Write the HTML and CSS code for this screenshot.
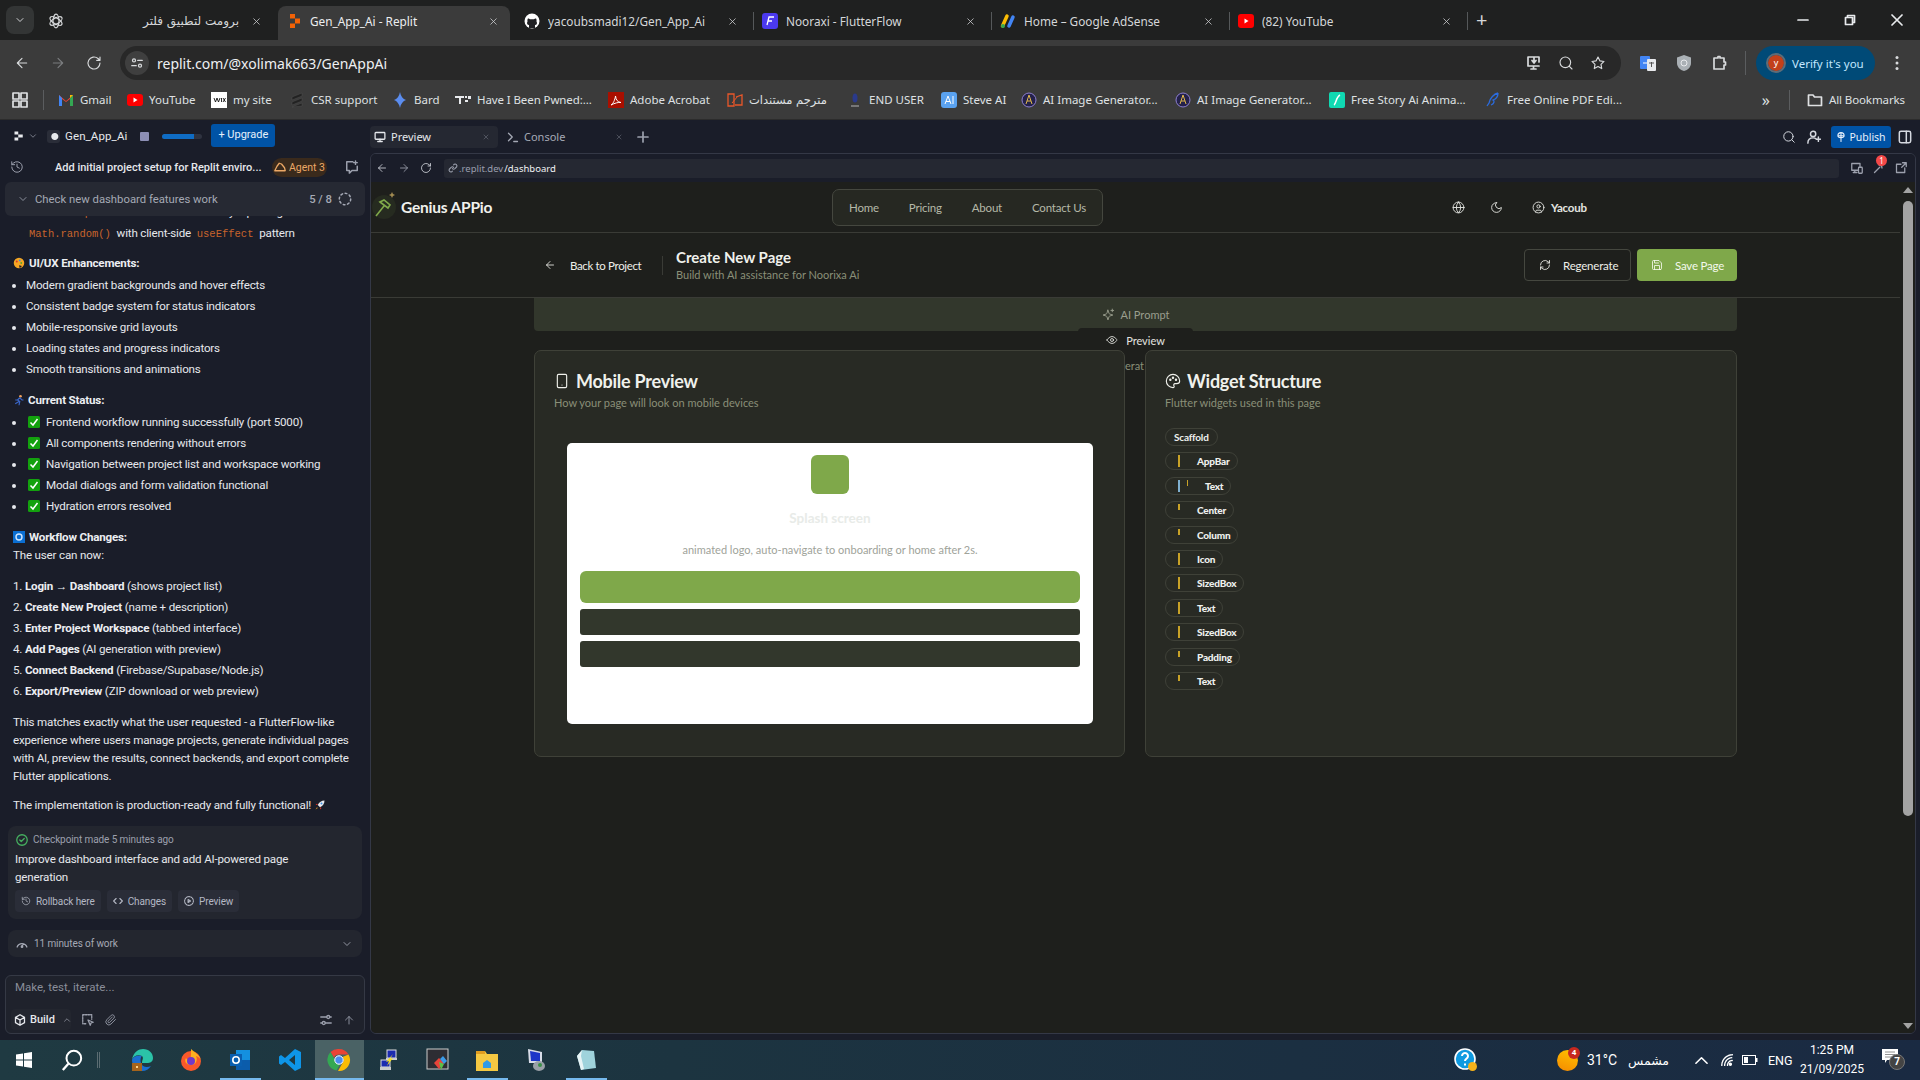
FILE: index.html
```html
<!DOCTYPE html>
<html lang="en">

<head>
    <meta charset="utf-8">
    <title>Gen_App_Ai - Replit</title>
    <link rel="stylesheet" href="styles.css">
</head>

<body>
    <!-- shared line icons -->
    <svg class="defs">
        <symbol id="i-left" viewBox="0 0 24 24"><path d="M19 12H5M12 19l-7-7 7-7"/></symbol>
        <symbol id="i-right" viewBox="0 0 24 24"><path d="M5 12h14M12 5l7 7-7 7"/></symbol>
        <symbol id="i-reload" viewBox="0 0 24 24"><path d="M21 12a9 9 0 1 1-3-6.7L21 8M21 3v5h-5"/></symbol>
        <symbol id="i-refresh" viewBox="0 0 24 24"><path d="M3 12a9 9 0 0 1 15-6.700L21 8M21 3v5h-5M21 12a9 9 0 0 1-15 6.700L3 16M3 21v-5h5"/></symbol>
        <symbol id="i-save" viewBox="0 0 24 24"><path d="M19 21H5a2 2 0 0 1-2-2V5a2 2 0 0 1 2-2h11l5 5v11a2 2 0 0 1-2 2zM17 21v-8H7v8M7 3v5h8"/></symbol>
        <symbol id="i-globe" viewBox="0 0 24 24"><circle cx="12" cy="12" r="10"/><path d="M2 12h20M12 2a15 15 0 0 1 4 10 15 15 0 0 1-4 10 15 15 0 0 1-4-10 15 15 0 0 1 4-10z"/></symbol>
        <symbol id="i-moon" viewBox="0 0 24 24"><path d="M12 3a6 6 0 0 0 9 9 9 9 0 1 1-9-9z"/></symbol>
        <symbol id="i-user" viewBox="0 0 24 24"><circle cx="12" cy="12" r="10"/><circle cx="12" cy="10" r="3"/><path d="M7 20.700V19a2 2 0 0 1 2-2h6a2 2 0 0 1 2 2v1.700"/></symbol>
        <symbol id="i-phone" viewBox="0 0 24 24"><rect x="5" y="2" width="14" height="20" rx="2"/><path d="M12 18h.01"/></symbol>
        <symbol id="i-palette" viewBox="0 0 24 24"><path d="M12 22a10 10 0 1 1 10-10c0 2.500-2 4-4.500 4H15a2 2 0 0 0-1.500 3.300c.6.8.2 2.700-1.500 2.700z"/><circle cx="8" cy="10" r="1"/><circle cx="12" cy="7" r="1"/><circle cx="16.500" cy="10" r="1"/></symbol>
        <symbol id="i-eye" viewBox="0 0 24 24"><path d="M2 12s4-7 10-7 10 7 10 7-4 7-10 7-10-7-10-7z"/><circle cx="12" cy="12" r="3"/></symbol>
        <symbol id="i-spark" viewBox="0 0 24 24"><path d="M11 4l1.900 5.800a2 2 0 0 0 1.300 1.300L20 13l-5.800 1.900a2 2 0 0 0-1.300 1.300L11 22l-1.900-5.800a2 2 0 0 0-1.300-1.300L2 13l5.800-1.900a2 2 0 0 0 1.300-1.300zM19 2v5M16.500 4.500h5"/></symbol>
        <symbol id="i-search" viewBox="0 0 24 24"><circle cx="11" cy="11" r="8"/><path d="M21 21l-4.300-4.300"/></symbol>
        <symbol id="i-close" viewBox="0 0 24 24"><path d="M6 6l12 12M18 6L6 18"/></symbol>
        <symbol id="i-down" viewBox="0 0 24 24"><path d="M6 9l6 6 6-6"/></symbol>
        <symbol id="i-up" viewBox="0 0 24 24"><path d="M12 20V5M5 12l7-7 7 7"/></symbol>
        <symbol id="i-clock" viewBox="0 0 24 24"><path d="M3 12a9 9 0 1 0 3-6.700L3 8M3 3v5h5M12 7v5l4 2"/></symbol>
    </svg>

    <!-- browser tabs -->
    <div class="tabstrip">
        <div class="tab-menu"><svg class="ic ic-12"><use href="#i-down"/></svg></div>
        <div class="tab">
            <svg class="fav" viewBox="0 0 16 16" fill="none" stroke="#d5d7d9" stroke-width="1.200"><ellipse cx="8" cy="8" rx="3" ry="6.800"/><ellipse cx="8" cy="8" rx="3" ry="6.800" transform="rotate(60 8 8)"/><ellipse cx="8" cy="8" rx="3" ry="6.800" transform="rotate(120 8 8)"/></svg>
            <span class="tab-title rtl">برومت لتطبيق فلتر</span>
            <svg class="ic tab-x"><use href="#i-close"/></svg>
        </div>
        <div class="tab active">
            <svg class="fav" viewBox="0 0 16 16"><path d="M4 1h5v4.500H4zM9 5.500h5v5H9zM4 10.500h5V15H4z" fill="#f26207"/></svg>
            <span class="tab-title">Gen_App_Ai - Replit</span>
            <svg class="ic tab-x"><use href="#i-close"/></svg>
        </div>
        <div class="tab sep">
            <svg class="fav" viewBox="0 0 16 16"><circle cx="8" cy="8" r="7.500" fill="#fff"/><path d="M5 15v-3C3 12 2.500 10 3.500 8.500 3.300 7 3.500 6 4 5.500c1 0 1.500.4 2 .8h4c.5-.4 1-.8 2-.8.5.5.7 1.500.5 3 1 1.500.5 3.500-1.500 3.500v3z" fill="#202124"/></svg>
            <span class="tab-title">yacoubsmadi12/Gen_App_Ai</span>
            <svg class="ic tab-x"><use href="#i-close"/></svg>
        </div>
        <div class="tab sep">
            <svg class="fav" viewBox="0 0 16 16"><rect width="16" height="16" rx="3" fill="#4b39ef"/><path d="M5 12l2-8h5M6 8h4" stroke="#fff" fill="none" stroke-width="1.300"/></svg>
            <span class="tab-title">Nooraxi - FlutterFlow</span>
            <svg class="ic tab-x"><use href="#i-close"/></svg>
        </div>
        <div class="tab sep">
            <svg class="fav" viewBox="0 0 16 16"><path d="M2.500 13L7 3" stroke="#fbbc04" stroke-width="3.500" stroke-linecap="round"/><path d="M9 13l4-9" stroke="#4285f4" stroke-width="3.500" stroke-linecap="round"/><circle cx="3" cy="13" r="2" fill="#34a853"/></svg>
            <span class="tab-title">Home – Google AdSense</span>
            <svg class="ic tab-x"><use href="#i-close"/></svg>
        </div>
        <div class="tab sep">
            <svg class="fav" viewBox="0 0 16 16"><rect y="1" width="16" height="14" rx="3" fill="#f00"/><path d="M6.500 5.500v5l4-2.500z" fill="#fff"/></svg>
            <span class="tab-title">(82) YouTube</span>
            <svg class="ic tab-x"><use href="#i-close"/></svg>
        </div>
        <span class="tab-new">+</span>
        <div class="win-controls">
            <svg class="ic ic-12" viewBox="0 0 12 12"><path d="M1 6h10"/></svg>
            <svg class="ic ic-12" viewBox="0 0 12 12"><path d="M1.500 3.500h7v7h-7zM3.500 3.500v-2h7v7h-2"/></svg>
            <svg class="ic ic-12" viewBox="0 0 12 12"><path d="M1 1l10 10M11 1L1 11"/></svg>
        </div>
    </div>

    <!-- address bar -->
    <div class="toolbar">
        <svg class="ic ic-16 nav-btn"><use href="#i-left"/></svg>
        <svg class="ic ic-16 nav-btn dim"><use href="#i-right"/></svg>
        <svg class="ic ic-16 nav-btn"><use href="#i-reload"/></svg>
        <div class="omnibox">
            <span class="site-chip"><svg class="ic ic-12" viewBox="0 0 16 16"><circle cx="4" cy="4.500" r="2"/><path d="M9 4.500h6M1 11.500h6"/><circle cx="12" cy="11.500" r="2"/></svg></span>
            <span class="omni-url">replit.com/@xolimak663/GenAppAi</span>
            <span class="omni-icons">
                <svg class="ic ic-16" viewBox="0 0 16 16"><path d="M13 7V2H2v9h11M8 7V3M6 5.500L8 8l2-2.500M5 14h5M7.500 11v3"/></svg>
                <svg class="ic ic-16"><use href="#i-search"/></svg>
                <svg class="ic ic-16" viewBox="0 0 24 24"><path d="M12 3l2.800 5.800 6.200.9-4.500 4.400 1.100 6.300L12 17.400l-5.600 3 1.100-6.300L3 9.700l6.200-.9z"/></svg>
            </span>
        </div>
        <div class="ext-icons">
            <svg class="fav-18" viewBox="0 0 18 18"><rect x="1" y="2" width="10" height="13" rx="1" fill="#4285f4"/><rect x="8" y="5" width="9" height="12" rx="1" fill="#e8eaed"/><path d="M4 9h4" stroke="#fff"/><path d="M10 9h5M12.500 8v5" stroke="#555"/></svg>
            <svg class="fav-18" viewBox="0 0 18 18"><path d="M9 1l7 2.500V9c0 4-3 7-7 8-4-1-7-4-7-8V3.500z" fill="#aab0b5"/><circle cx="9" cy="9" r="3" fill="none" stroke="#e8eaed"/></svg>
            <svg class="ic ic-16" viewBox="0 0 16 16"><path d="M3 3h4V1.500h2V3h4v4h1.500v3H13v4H3z"/></svg>
        </div>
        <span class="tool-sep"></span>
        <div class="verify"><span class="avatar">y</span>Verify it's you</div>
        <svg class="menu-dots" viewBox="0 0 4 16"><circle cx="2" cy="2.500" r="1.500"/><circle cx="2" cy="8" r="1.500"/><circle cx="2" cy="13.500" r="1.500"/></svg>
    </div>

    <!-- bookmarks -->
    <div class="bookmarks">
        <svg class="ic ic-16 apps" viewBox="0 0 16 16"><path d="M1 1h6v6H1zM9 1h6v6H9zM1 9h6v6H1zM9 9h6v6H9z"/></svg>
        <span class="tool-sep short"></span>
        <a class="bm bm-gmail"><svg class="fav" viewBox="0 0 16 16"><path d="M1 14V3l7 6 7-6v11h-3V7L8 10 4 7v7z" fill="#ea4335"/><path d="M1 14V3l3 3v8z" fill="#4285f4"/><path d="M15 14V3l-3 3v8z" fill="#34a853"/><path d="M12 3l3 0-3 3z" fill="#fbbc04"/></svg>Gmail</a>
        <a class="bm bm-yt"><svg class="fav" viewBox="0 0 16 16"><rect y="2" width="16" height="12" rx="3" fill="#f00"/><path d="M6.500 5.500v5l4-2.500z" fill="#fff"/></svg>YouTube</a>
        <a class="bm bm-wix"><svg class="fav" viewBox="0 0 16 16"><rect width="16" height="16" fill="#fff"/><path d="M3 6l1.500 4L6 6l1.500 4L9 6M10.500 6v4M12 6l2.500 4M14.500 6L12 10" stroke="#111" fill="none" stroke-width=".9"/></svg>my site</a>
        <a class="bm bm-csr"><svg class="fav" viewBox="0 0 16 16"><path d="M3 5l10-4v3L3 8zM3 10l10-4v3L3 13zM3 15l10-4v3z" fill="#222" stroke="#555" stroke-width=".4"/></svg>CSR support</a>
        <a class="bm bm-bard"><svg class="fav" viewBox="0 0 16 16"><path d="M8 0c.6 4 3 7 6 8-3 1-5.400 4-6 8-.6-4-3-7-6-8 3-1 5.400-4 6-8z" fill="#5b8def"/></svg>Bard</a>
        <a class="bm bm-pwned"><svg class="fav" viewBox="0 0 16 16"><path d="M0 4h9v2H6v6H4V6H0zM10 4h2v2h-2zM13 4h3v3h-3zM10 8h3v2h-3z" fill="#e8eaed"/></svg>Have I Been Pwned:...</a>
        <a class="bm bm-adobe"><svg class="fav" viewBox="0 0 16 16"><rect width="16" height="16" fill="#a80f00"/><path d="M3 13c2-1 4-5 4.500-9 .5 4 2 6 5.500 6.500-3-.3-6 .5-10 2.500z" fill="none" stroke="#fff"/></svg>Adobe Acrobat</a>
        <a class="bm bm-ar"><svg class="fav" viewBox="0 0 16 16"><path d="M1 2h6v12H1zM9 5l6-2v10H8" fill="none" stroke="#e8572a" stroke-width="1.300"/><path d="M5 11l6-7" stroke="#e8572a"/></svg><span class="rtl">مترجم مستندات</span></a>
        <a class="bm bm-end"><svg class="fav" viewBox="0 0 16 16"><ellipse cx="8" cy="6" rx="2.500" ry="4.500" fill="#2a3a8c"/><path d="M4 13h8v2H4z" fill="#777"/></svg>END USER</a>
        <a class="bm bm-steve"><svg class="fav" viewBox="0 0 16 16"><rect width="16" height="16" rx="3" fill="#5aa2f0"/><path d="M4 12l3-8 3 8M5 9.500h4M12 4v8" stroke="#fff" fill="none"/></svg>Steve AI</a>
        <a class="bm bm-img"><svg class="fav" viewBox="0 0 16 16"><circle cx="8" cy="8" r="7" fill="#24214a" stroke="#8d7fd0"/><path d="M5 12l3-9 3 9M6 9h4" stroke="#e0b84c" fill="none"/></svg>AI Image Generator...</a>
        <a class="bm bm-img2"><svg class="fav" viewBox="0 0 16 16"><circle cx="8" cy="8" r="7" fill="#24214a" stroke="#8d7fd0"/><path d="M5 12l3-9 3 9M6 9h4" stroke="#e0b84c" fill="none"/></svg>AI Image Generator...</a>
        <a class="bm bm-story"><svg class="fav" viewBox="0 0 16 16"><rect width="16" height="16" rx="2" fill="#10d9b2"/><path d="M5 13c2-1 2-8 6-10" stroke="#fff" fill="none" stroke-width="1.500"/></svg>Free Story Ai Anima...</a>
        <a class="bm"><svg class="fav" viewBox="0 0 16 16"><path d="M13 1C9 2 5 6 4 11l-2 3M13 1c0 3-2 6-5 7 2 1 1 4-2 5" stroke="#2b6ce0" fill="none" stroke-width="1.300"/></svg>Free Online PDF Edi...</a>
        <span class="bm-more">»</span>
        <span class="tool-sep short"></span>
        <a class="bm bm-all"><svg class="ic ic-16" viewBox="0 0 16 16"><path d="M1.500 3h4.500l1.500 2h7v8.500h-13z"/></svg>All Bookmarks</a>
    </div>

    <div class="workspace">
        <!-- agent chat -->
        <aside class="chat">
            <div class="chat-top">
                <svg class="rep-logo" viewBox="0 0 16 16"><path d="M2 2h5v4H2zM7 6h6v4H7zM2 10h5v4H2z" fill="#e8eaed"/></svg>
                <svg class="ic ic-10 muted"><use href="#i-down"/></svg>
                <span class="proj-chip"></span>
                <span class="proj-name">Gen_App_Ai</span>
                <span class="stop-box"></span>
                <span class="usage"><span></span></span>
                <span class="upgrade">+ Upgrade</span>
            </div>
            <div class="chat-title">
                <svg class="ic ic-14 muted"><use href="#i-clock"/></svg>
                <span class="thread">Add initial project setup for Replit enviro...</span>
                <span class="agent"><svg class="ic ic-12" viewBox="0 0 16 16"><path d="M1 13l3-6 3-4 3 1 4 5 1 4z"/></svg>Agent 3</span>
                <svg class="ic ic-14 muted new-chat" viewBox="0 0 16 16"><path d="M9 2H2v10h3v3l3-3h6V7M12 1v4M10 3h4"/></svg>
            </div>
            <div class="task-row">
                <svg class="ic ic-12 muted"><use href="#i-down"/></svg>
                <span class="task-name">Check new dashboard features work</span>
                <span class="task-count">5 / 8</span>
                <svg class="ic ic-14 spinner" viewBox="0 0 16 16"><circle cx="8" cy="8" r="6.500" stroke-dasharray="2 3"/></svg>
            </div>
            <div class="messages">
                <ul class="clipped">
                    <li>in <code>src/components/ui/StatusView</code> by replacing<br><code>Math.random()</code> with client-side <code>useEffect</code> pattern</li>
                </ul>
                <h4 class="msg-head"><svg class="emoji" viewBox="0 0 16 16"><circle cx="8" cy="8" r="7" fill="#f5a623"/><circle cx="5" cy="6" r="1.300" fill="#d9362b"/><circle cx="9" cy="4.500" r="1.200" fill="#3a8ee6"/><circle cx="11" cy="8" r="1.200" fill="#55a630"/><path d="M9 15l-1-4 4 1z" fill="#1a1d29"/></svg>UI/UX Enhancements:</h4>
                <ul class="bullets">
                    <li>Modern gradient backgrounds and hover effects</li>
                    <li>Consistent badge system for status indicators</li>
                    <li>Mobile-responsive grid layouts</li>
                    <li>Loading states and progress indicators</li>
                    <li>Smooth transitions and animations</li>
                </ul>
                <h4 class="msg-head status"><svg class="emoji" viewBox="0 0 16 16"><circle cx="10" cy="3" r="1.800" fill="#f0a05a"/><path d="M9 5L6 8l3 2-1 5M9 5l3 3 2 0M6 8H3M8 10l-5 3" stroke="#3a66c8" stroke-width="1.600" fill="none"/></svg>Current Status:</h4>
                <ul class="bullets checks">
                    <li><svg class="tick" viewBox="0 0 12 12"><rect width="12" height="12" rx="1.500" fill="#13a10e"/><path d="M2.500 6.500l2.500 2.500 4.500-6" stroke="#fff" stroke-width="1.500" fill="none"/></svg>Frontend workflow running successfully (port 5000)</li>
                    <li><svg class="tick" viewBox="0 0 12 12"><rect width="12" height="12" rx="1.500" fill="#13a10e"/><path d="M2.500 6.500l2.500 2.500 4.500-6" stroke="#fff" stroke-width="1.500" fill="none"/></svg>All components rendering without errors</li>
                    <li><svg class="tick" viewBox="0 0 12 12"><rect width="12" height="12" rx="1.500" fill="#13a10e"/><path d="M2.500 6.500l2.500 2.500 4.500-6" stroke="#fff" stroke-width="1.500" fill="none"/></svg>Navigation between project list and workspace working</li>
                    <li><svg class="tick" viewBox="0 0 12 12"><rect width="12" height="12" rx="1.500" fill="#13a10e"/><path d="M2.500 6.500l2.500 2.500 4.500-6" stroke="#fff" stroke-width="1.500" fill="none"/></svg>Modal dialogs and form validation functional</li>
                    <li><svg class="tick" viewBox="0 0 12 12"><rect width="12" height="12" rx="1.500" fill="#13a10e"/><path d="M2.500 6.500l2.500 2.500 4.500-6" stroke="#fff" stroke-width="1.500" fill="none"/></svg>Hydration errors resolved</li>
                </ul>
                <h4 class="msg-head flow"><svg class="emoji" viewBox="0 0 12 12"><rect width="12" height="12" fill="#0a6ed1"/><circle cx="6" cy="6" r="3" fill="none" stroke="#cfe6ff" stroke-width="1.400"/></svg>Workflow Changes:</h4>
                <p class="msg-line">The user can now:</p>
                <ol class="steps">
                    <li>1. <b>Login → Dashboard</b> (shows project list)</li>
                    <li>2. <b>Create New Project</b> (name + description)</li>
                    <li>3. <b>Enter Project Workspace</b> (tabbed interface)</li>
                    <li>4. <b>Add Pages</b> (AI generation with preview)</li>
                    <li>5. <b>Connect Backend</b> (Firebase/Supabase/Node.js)</li>
                    <li>6. <b>Export/Preview</b> (ZIP download or web preview)</li>
                </ol>
                <p class="msg-para">This matches exactly what the user requested - a FlutterFlow-like experience where users manage projects, generate individual pages with AI, preview the results, connect backends, and export complete Flutter applications.</p>
                <p class="msg-para">The implementation is production-ready and fully functional! <svg class="emoji rocket" viewBox="0 0 16 16"><path d="M14 2c-4 0-7 2-9 6l3 3c4-2 6-5 6-9z" fill="#e8eaed"/><circle cx="10" cy="6" r="1.300" fill="#3a8ee6"/><path d="M5 8H2l2-2zM8 11v3l2-2z" fill="#d9362b"/><path d="M4 11l-2 3 3-2z" fill="#f5a623"/></svg></p>

                <div class="checkpoint">
                    <div class="cp-head"><svg class="ic ic-12 green" viewBox="0 0 16 16"><circle cx="8" cy="8" r="7"/><path d="M5 8l2 2 4-4"/></svg>Checkpoint made 5 minutes ago</div>
                    <p class="cp-text">Improve dashboard interface and add AI-powered page generation</p>
                    <div class="cp-actions">
                        <span class="cp-btn"><svg class="ic ic-10"><use href="#i-clock"/></svg>Rollback here</span>
                        <span class="cp-btn"><svg class="ic ic-10" viewBox="0 0 16 16"><path d="M5 4L1 8l4 4M11 4l4 4-4 4"/></svg>Changes</span>
                        <span class="cp-btn"><svg class="ic ic-10" viewBox="0 0 16 16"><circle cx="8" cy="8" r="7" stroke-dasharray="2 1.500"/><path d="M6.500 5.500v5l4-2.500z"/></svg>Preview</span>
                    </div>
                </div>
                <div class="work-row">
                    <svg class="ic ic-12" viewBox="0 0 16 16"><path d="M1.500 12a7 7 0 0 1 13 0M8 11l2-3"/><circle cx="8" cy="11.500" r="1"/></svg>
                    <span>11 minutes of work</span>
                    <svg class="ic ic-12 work-caret"><use href="#i-down"/></svg>
                </div>
            </div>
            <div class="composer">
                <div class="placeholder">Make, test, iterate...</div>
                <div class="composer-bar">
                    <span class="build"><svg class="ic ic-12" viewBox="0 0 16 16"><path d="M8 1l6 3.500v7L8 15l-6-3.500v-7zM2 4.500L8 8l6-3.500M8 8v7"/></svg>Build<svg class="ic ic-10 flip"><use href="#i-down"/></svg></span>
                    <svg class="ic ic-12 muted" viewBox="0 0 16 16"><path d="M1 1h12v6M1 1v12h5" stroke-dasharray="2 1.500"/><path d="M8 8l7 3-3 1-1 3z"/></svg>
                    <svg class="ic ic-12 muted" viewBox="0 0 24 24"><path d="M21 11l-9 9a6 6 0 0 1-8.500-8.500l9-9a4 4 0 0 1 5.600 5.600l-9 9a2 2 0 0 1-2.800-2.800l8.500-8.500"/></svg>
                    <svg class="ic ic-12 muted composer-tune" viewBox="0 0 16 16"><path d="M1 4h8M13 4h2M1 12h2M7 12h8"/><circle cx="11" cy="4" r="2"/><circle cx="5" cy="12" r="2"/></svg>
                    <svg class="ic ic-12 muted"><use href="#i-up"/></svg>
                </div>
            </div>
        </aside>

        <!-- preview pane -->
        <section class="pane">
            <div class="pane-tabs">
                <div class="pane-tab on"><svg class="ic ic-12" viewBox="0 0 16 16"><rect x="1.500" y="2" width="13" height="9" rx="1"/><path d="M8 11v3M5 14h6"/></svg><span>Preview</span><svg class="ic ic-8 pane-x"><use href="#i-close"/></svg></div>
                <div class="pane-tab"><svg class="ic ic-12" viewBox="0 0 16 16"><path d="M2 3l5 5-5 5M9 14h5"/></svg><span>Console</span><svg class="ic ic-8 pane-x"><use href="#i-close"/></svg></div>
                <svg class="ic ic-12 muted pane-plus" viewBox="0 0 12 12"><path d="M6 1v10M1 6h10"/></svg>
                <div class="pane-tools">
                    <svg class="ic ic-14"><use href="#i-search"/></svg>
                    <svg class="ic ic-14" viewBox="0 0 16 16"><circle cx="7" cy="4.500" r="3"/><path d="M1 15c0-4 2-6 6-6 1.500 0 2.500.3 3.300 1M13 8v5M10.500 10.500h5"/></svg>
                    <span class="publish"><svg class="ic ic-10" viewBox="0 0 16 16"><path d="M8 1a5 5 0 0 1 5 5c0 2-2 3-5 3S3 8 3 6a5 5 0 0 1 5-5zM8 9v6M8 1v8M3 6h10"/></svg>Publish</span>
                    <svg class="ic ic-14" viewBox="0 0 16 16"><rect x="1.500" y="1.500" width="13" height="13" rx="2"/><path d="M9.500 1.500v13"/></svg>
                </div>
            </div>
            <div class="frame">
                <div class="url-row">
                    <svg class="ic ic-12"><use href="#i-left"/></svg>
                    <svg class="ic ic-12 muted"><use href="#i-right"/></svg>
                    <svg class="ic ic-12"><use href="#i-reload"/></svg>
                    <div class="url-box"><svg class="ic ic-10 muted" viewBox="0 0 16 16"><path d="M7 9a3 3 0 0 0 4 0l3-3a3 3 0 0 0-4-4L9 3M9 7a3 3 0 0 0-4 0l-3 3a3 3 0 0 0 4 4l1-1"/></svg><span>.replit.dev</span><b>/dashboard</b></div>
                    <svg class="ic ic-12 muted" viewBox="0 0 16 16"><path d="M10 11H1V2h11v4M5 11v3M3 14h5"/><rect x="10" y="7" width="5" height="8" rx="1"/></svg>
                    <span class="devtools"><svg class="ic ic-12 muted" viewBox="0 0 16 16"><path d="M2 14l7-7M8 4a4 4 0 0 1 4 4"/></svg><span class="red-badge">1</span></span>
                    <svg class="ic ic-12 muted" viewBox="0 0 16 16"><path d="M8 3H2v11h11V8M9 7l6-6M10 1h5v5"/></svg>
                </div>
                <div class="viewport">
                    <div class="page">
                        <header class="app-head">
                            <svg class="brand-mark" viewBox="0 0 26 30"><circle cx="13" cy="17" r="12" fill="#262b20"/><path d="M5 26l8-10M9 12l8 6 2-3-6-5z" stroke="#7fa84a" stroke-width="1.600" fill="none"/><path d="M21 2l1 2 2 1-2 1-1 2-1-2-2-1 2-1z" fill="#a08a50"/></svg>
                            <span class="brand">Genius APPio</span>
                            <nav class="app-nav"><a>Home</a><a>Pricing</a><a>About</a><a>Contact Us</a></nav>
                            <div class="head-right">
                                <svg class="ic ic-13"><use href="#i-globe"/></svg>
                                <svg class="ic ic-13 moon"><use href="#i-moon"/></svg>
                                <span class="who"><svg class="ic ic-13"><use href="#i-user"/></svg>Yacoub</span>
                            </div>
                        </header>
                        <div class="sub-head">
                            <span class="back"><svg class="ic ic-12"><use href="#i-left"/></svg>Back to Project</span>
                            <span class="vline"></span>
                            <div class="sub-title">
                                <h1>Create New Page</h1>
                                <p>Build with AI assistance for Noorixa Ai</p>
                            </div>
                            <span class="btn outline"><svg class="ic ic-12"><use href="#i-refresh"/></svg>Regenerate</span>
                            <span class="btn primary"><svg class="ic ic-12"><use href="#i-save"/></svg>Save Page</span>
                        </div>
                        <div class="content">
                            <div class="prompt-tab"><svg class="ic ic-13"><use href="#i-spark"/></svg>AI Prompt</div>
                            <div class="preview-tab"><svg class="ic ic-12"><use href="#i-eye"/></svg>Preview</div>
                            <div class="cards">
                                <div class="card">
                                    <h2><svg class="ic ic-16"><use href="#i-phone"/></svg>Mobile Preview</h2>
                                    <p class="card-sub">How your page will look on mobile devices</p>
                                    <div class="phone">
                                        <div class="phone-logo"></div>
                                        <div class="phone-title">Splash screen</div>
                                        <div class="phone-desc">animated logo, auto-navigate to onboarding or home after 2s.</div>
                                        <div class="ph-btn green-bar"></div>
                                        <div class="ph-btn"></div>
                                        <div class="ph-btn"></div>
                                    </div>
                                </div>
                                <div class="gap-col"><span>erat</span></div>
                                <div class="card">
                                    <h2><svg class="ic ic-16"><use href="#i-palette"/></svg>Widget Structure</h2>
                                    <p class="card-sub">Flutter widgets used in this page</p>
                                    <div class="chips">
                                        <span class="chip root">Scaffold</span>
                                        <span class="chip"><i></i><b>AppBar</b></span>
                                        <span class="chip nested"><i class="blue"></i><i class="tiny"></i><b>Text</b></span>
                                        <span class="chip"><i class="tiny"></i><b>Center</b></span>
                                        <span class="chip"><i class="tiny"></i><b>Column</b></span>
                                        <span class="chip"><i></i><b>Icon</b></span>
                                        <span class="chip"><i></i><b>SizedBox</b></span>
                                        <span class="chip"><i></i><b>Text</b></span>
                                        <span class="chip"><i></i><b>SizedBox</b></span>
                                        <span class="chip"><i class="tiny"></i><b>Padding</b></span>
                                        <span class="chip"><i class="tiny"></i><b>Text</b></span>
                                    </div>
                                </div>
                            </div>
                        </div>
                    </div>
                    <div class="scrollbar">
                        <span class="arrow-up"></span>
                        <span class="thumb"></span>
                        <span class="arrow-down"></span>
                    </div>
                </div>
            </div>
        </section>
    </div>

    <!-- windows taskbar -->
    <footer class="taskbar">
        <svg class="tb-ic win" viewBox="0 0 16 16"><path d="M0 2.500l7-1v6H0zM8 1.300L16 0v7.500H8zM0 8.500h7v6l-7-1zM8 8.500h8V16l-8-1.300z" fill="#fff"/></svg>
        <svg class="tb-ic find" viewBox="0 0 24 24"><circle cx="14" cy="10" r="8" fill="none" stroke="#fff" stroke-width="2.200"/><path d="M8 16l-6 7" stroke="#fff" stroke-width="2.500"/></svg>
        <span class="tb-grip"></span>
        <span class="app"><svg class="tb-ic" viewBox="0 0 24 24"><path d="M2 12C3 4 9 1 13 1c6 0 10 4 10 9 0 4-3 5-6 5h-5c0-3 2-5 0-7C8 6 3 8 2 12z" fill="#2bc3a8"/><path d="M2 12c0 6 5 11 10 11 4 0 7-2 9-5-4 2-9 1-10-3-1-3 0-7 1-7-4-1-9 0-10 4z" fill="#1b6fd0"/><rect x="2" y="15" width="10" height="8" fill="#a5641c"/><rect x="6" y="18" width="2" height="2" fill="#ffd58a"/></svg></span>
        <span class="app"><svg class="tb-ic" viewBox="0 0 24 24"><circle cx="12" cy="13" r="10" fill="#f9582a"/><path d="M12 1c3 3 8 5 10 11-2-3-4-4-5-4 2 4 0 9-5 9s-7-4-5-7c1 2 3 2 4 1s1-5 1-10z" fill="#ffb01f"/><circle cx="12" cy="13" r="4" fill="#7338c8"/></svg></span>
        <span class="app run"><svg class="tb-ic" viewBox="0 0 24 24"><path d="M8 2h14v20H8z" fill="#1490df"/><path d="M8 12h14v10H8z" fill="#0b5cab"/><rect x="2" y="6" width="12" height="12" fill="#0a5fb0"/><circle cx="8" cy="12" r="3.200" fill="none" stroke="#fff" stroke-width="1.600"/></svg></span>
        <span class="app"><svg class="tb-ic" viewBox="0 0 24 24"><path d="M17 1l6 3v16l-6 3L7 14l-4 3-2-1.500V8.500L3 7l4 3zM17 7l-6 5 6 5z" fill="#0e95e8" fill-rule="evenodd"/></svg></span>
        <span class="app run current"><svg class="tb-ic" viewBox="0 0 24 24"><path d="M12 1a11 11 0 0 1 9.500 5.500H12a5.500 5.500 0 0 0-5 3.200L3.500 4A11 11 0 0 1 12 1z" fill="#ea4335"/><path d="M3.500 4L8 12a4.500 4.500 0 0 0 5 4.300L9.500 22.500A11 11 0 0 1 3.500 4z" fill="#34a853"/><path d="M21.500 6.500A11 11 0 0 1 11 23l4.500-8a5 5 0 0 0 0-6z" fill="#fbbc04"/><circle cx="12" cy="12" r="4.200" fill="#4a8cf0" stroke="#fff"/></svg></span>
        <span class="app"><svg class="tb-ic" viewBox="0 0 24 24"><rect x="10" y="2" width="9" height="8" fill="#1c2bb0" stroke="#ddd"/><rect x="9" y="10" width="11" height="2" fill="#ccc"/><rect x="4" y="12" width="9" height="7" fill="#1c2bb0" stroke="#ddd"/><rect x="3" y="19" width="11" height="3" fill="#ccc"/><path d="M16 6l-7 8 3-1-2 5 6-8-3 1z" fill="#f5e11c"/></svg></span>
        <span class="app"><svg class="tb-ic" viewBox="0 0 24 24"><rect x="1" y="1" width="21" height="20" fill="#2d2d33" stroke="#ccc"/><path d="M13 10l5 5-5 6-5-6z" fill="#e8443a"/><path d="M17 8l4 5-3 3-4-5z" fill="#3a9ae8"/><path d="M13 14l5 2-3 6z" fill="#5bc04a"/></svg></span>
        <span class="app run"><svg class="tb-ic" viewBox="0 0 24 24"><path d="M1 3h9l2 3h11v17H1z" fill="#f5c842"/><path d="M1 3h9v3H1z" fill="#e09c20"/><path d="M8 15l4-3 4 3v5H8z" fill="#2f9ae8"/></svg></span>
        <span class="app"><svg class="tb-ic" viewBox="0 0 24 24"><path d="M3 1l14 3v11H4z" fill="#d8dce8"/><path d="M5 3l10 2v8H6z" fill="#1c36c8"/><ellipse cx="14" cy="18" rx="6" ry="5" fill="#9aa0a8"/><circle cx="15" cy="17" r="2" fill="#3a8f48"/></svg></span>
        <span class="app run"><svg class="tb-ic" viewBox="0 0 24 24"><path d="M8 2l12 1 2 17-15 2L3 8z" fill="#9fd3dc"/><path d="M8 2L3 8l4 14 3-1-3-13z" fill="#e8f4f6"/></svg></span>
        <div class="tray">
            <span class="tray-help"><svg class="tb-ic" viewBox="0 0 24 24"><circle cx="11" cy="11" r="10" fill="#0f9ae0" stroke="#fff" stroke-width="1.600"/><path d="M8 8a3 3 0 1 1 4.500 2.600c-1 .6-1.500 1-1.500 2.400M11 15.500v2" stroke="#fff" stroke-width="2" fill="none"/><circle cx="18.500" cy="18.500" r="4.500" fill="#f5b21a"/></svg></span>
            <span class="weather"><span class="sun"></span><span class="sun-badge">4</span></span>
            <span class="temp">31°C</span>
            <span class="sky rtl">مشمس</span>
            <svg class="ic ic-13 tray-up" viewBox="0 0 14 14"><path d="M1 10l6-6 6 6"/></svg>
            <svg class="ic ic-13 tray-wifi" viewBox="0 0 16 16"><path d="M1 14a13 13 0 0 1 13-13M4.500 14a9.500 9.500 0 0 1 9.500-9.500M8 14a6 6 0 0 1 6-6" stroke-dasharray="1.500 1"/><circle cx="11.500" cy="12.500" r="1.300" fill="#fff"/></svg>
            <svg class="tray-batt" viewBox="0 0 16 10"><rect x=".5" y=".5" width="13" height="9" fill="none" stroke="#fff"/><rect x="2" y="2" width="4" height="6" fill="#fff"/><rect x="14" y="3" width="1.500" height="4" fill="#fff"/></svg>
            <span class="lang">ENG</span>
            <div class="clock"><span>1:25 PM</span><span>21/09/2025</span></div>
            <span class="notif"><svg class="notif-ic" viewBox="0 0 16 14"><path d="M0 0h16v11H5l-2 3v-3H0z" fill="#fff"/><path d="M3 3h10M3 5.500h10M3 8h7" stroke="#777" stroke-width=".8"/></svg><span class="notif-count">7</span></span>
        </div>
    </footer>
</body>

</html>
```

FILE: styles.css
```css
* {
    box-sizing: border-box;
}

html,
body {
    margin: 0;
    height: 100%;
}

body {
    width: 1920px;
    height: 1080px;
    overflow: hidden;
    display: flex;
    flex-direction: column;
    background-color: #1a1d29;
    color: #e6e8ec;
    font-family: "Noto Sans", "DejaVu Sans", sans-serif;
    font-size: 12px;
}

a {
    text-decoration: none;
    color: inherit;
}

.defs {
    display: none;
}

.rtl {
    direction: rtl;
    font-family: "DejaVu Sans", sans-serif;
}

.ic {
    fill: none;
    stroke: currentColor;
    stroke-width: 1.7;
    stroke-linecap: round;
    stroke-linejoin: round;
    flex: none;
}

.ic-8 { width: 8px; height: 8px; }
.ic-10 { width: 10px; height: 10px; }
.ic-12 { width: 12px; height: 12px; }
.ic-13 { width: 13px; height: 13px; }
.ic-14 { width: 14px; height: 14px; }
.ic-16 { width: 16px; height: 16px; }

.muted {
    color: #9ca0ad;
}

.fav {
    width: 16px;
    height: 16px;
    flex: none;
}

.fav-18 {
    width: 18px;
    height: 18px;
    flex: none;
}

/* browser tabs */
.tabstrip {
    height: 40px;
    flex: none;
    display: flex;
    align-items: flex-end;
    background-color: #1f2020;
    padding-left: 6px;
}

.tab-menu {
    width: 28px;
    height: 28px;
    margin: 0 6px 6px 0;
    border-radius: 8px;
    background-color: #333535;
    display: flex;
    align-items: center;
    justify-content: center;
    color: #e8eaed;
}

.tab {
    width: 238px;
    height: 34px;
    padding: 0 16px 4px 8px;
    display: flex;
    align-items: center;
    gap: 8px;
    color: #d5d7d9;
    font-size: 11.8px;
    position: relative;
}

.tab.active {
    width: 232px;
    margin-right: 6px;
    padding-right: 11px;
    background-color: #3b3b3b;
    border-radius: 8px 8px 0 0;
    color: #eceef0;
}

.tab.sep::after {
    content: "";
    position: absolute;
    right: 0;
    top: 6px;
    width: 1px;
    height: 18px;
    background-color: #55585a;
}

.tab-title {
    flex: 1;
    white-space: nowrap;
    overflow: hidden;
}

.tab-title.rtl {
    font-size: 12px;
    padding-right: 4px;
}

.tab-x {
    color: #cfd1d3;
    width: 11px;
    height: 11px;
}

.tab-new {
    font-size: 20px;
    line-height: 20px;
    margin: 0 0 10px 8px;
    color: #d5d7d9;
}

.win-controls {
    margin-left: auto;
    display: flex;
    gap: 35px;
    padding: 0 17px 14px 0;
    color: #e8eaed;
}

/* address bar */
.toolbar {
    height: 40px;
    flex: none;
    display: flex;
    align-items: center;
    background-color: #3b3b3b;
    padding: 6px 0 0 14px;
    color: #d9dbdd;
}

.nav-btn {
    margin-right: 20px;
}

.nav-btn.dim {
    color: #7b7d7f;
}

.toolbar .nav-btn:nth-child(3) {
    margin-right: 18px;
}

.omnibox {
    width: 1501px;
    height: 34px;
    border-radius: 17px;
    background-color: #282828;
    display: flex;
    align-items: center;
    padding: 0 15px 0 5px;
}

.site-chip {
    width: 24px;
    height: 24px;
    border-radius: 50%;
    background-color: #3f3f3f;
    display: flex;
    align-items: center;
    justify-content: center;
    margin-right: 8px;
}

.omni-url {
    font-size: 14px;
    color: #eef0f2;
}

.omni-icons {
    margin-left: auto;
    display: flex;
    gap: 16px;
}

.ext-icons {
    display: flex;
    align-items: center;
    gap: 18px;
    margin-left: 18px;
}

.tool-sep {
    width: 1px;
    height: 24px;
    background-color: #5b5d5f;
    margin: 0 10px 0 18px;
}

.tool-sep.short {
    margin: 0;
    height: 20px;
}

.verify {
    width: 119px;
    height: 34px;
    border-radius: 17px;
    background-color: #004a77;
    color: #c2e7ff;
    display: flex;
    align-items: center;
    gap: 8px;
    padding-left: 12px;
    font-size: 11.5px;
}

.avatar {
    width: 16px;
    height: 16px;
    border-radius: 50%;
    background-color: #c2401a;
    color: #fff;
    font-size: 9px;
    text-align: center;
    line-height: 15px;
    outline: 2px solid #5d6c78;
    flex: none;
}

.menu-dots {
    width: 4px;
    height: 16px;
    margin-left: 20px;
    fill: #d9dbdd;
}

/* bookmarks */
.bookmarks {
    height: 40px;
    flex: none;
    display: flex;
    align-items: center;
    background-color: #3b3b3b;
    border-bottom: 1px solid #2c2c2c;
    padding-left: 12px;
    color: #dfe1e3;
    font-size: 11.5px;
}

.apps {
    margin-right: 15px;
}

.bm {
    display: flex;
    align-items: center;
    gap: 6px;
    white-space: nowrap;
    flex: none;
}

/* each bookmark takes the width it has in the bar */
.bm-gmail { width: 69px; margin-left: 14px; }
.bm-yt { width: 84px; }
.bm-wix { width: 78px; }
.bm-csr { width: 103px; }
.bm-bard { width: 63px; }
.bm-pwned { width: 153px; letter-spacing: -.1px; }
.bm-adobe { width: 119px; }
.bm-ar { width: 120px; }
.bm-end { width: 94px; }
.bm-steve { width: 80px; }
.bm-img { width: 154px; }
.bm-img2 { width: 154px; }
.bm-story { width: 156px; }

.bm-more {
    margin-left: auto;
    margin-right: 19px;
    font-size: 16px;
}

.bm-all {
    margin: 0 15px 0 17px;
    letter-spacing: -.1px;
}

/* main area */
.workspace {
    flex: 1;
    min-height: 0;
    display: flex;
    background-color: #1a1d29;
}

.chat {
    width: 370px;
    flex: none;
    display: flex;
    flex-direction: column;
    padding-bottom: 6px;
    font-family: "Roboto", "Noto Sans", sans-serif;
}

.chat-top {
    height: 32px;
    flex: none;
    display: flex;
    align-items: center;
    padding: 0 0 0 13px;
}

.rep-logo {
    width: 12px;
    height: 14px;
    margin-right: 3px;
}

.proj-chip {
    width: 13px;
    height: 13px;
    margin-left: 9px;
    border-radius: 3px;
    background: radial-gradient(circle at 60% 50%, #e8eaed 3px, #2a2d38 4px);
}

.proj-name {
    margin-left: 5px;
    font-size: 11.5px;
    letter-spacing: .1px;
}

.stop-box {
    width: 9px;
    height: 9px;
    margin-left: 13px;
    background-color: #8d8fb5;
    border-radius: 1px;
}

.usage {
    width: 40px;
    height: 5px;
    margin-left: 13px;
    border-radius: 3px;
    background-color: #2f3340;
    overflow: hidden;
}

.usage span {
    display: block;
    height: 100%;
    width: 80%;
    background-color: #0f6cc4;
}

.upgrade {
    width: 64px;
    height: 23px;
    margin: -2px 0 0 9px;
    border-radius: 3px;
    background-color: #0053a6;
    color: #e6f0fb;
    font-size: 11px;
    line-height: 22px;
    text-align: center;
}

.chat-title {
    height: 30px;
    flex: none;
    display: flex;
    align-items: center;
    padding: 0 10px;
}

.thread {
    width: 217px;
    margin-left: 31px;
    font-size: 11px;
    font-weight: 500;
    white-space: nowrap;
}

.agent {
    width: 55px;
    height: 19px;
    border-radius: 10px;
    background-color: #3a2a1c;
    color: #eca866;
    font-size: 10.5px;
    display: flex;
    align-items: center;
    justify-content: center;
    gap: 3px;
    flex: none;
}

.new-chat {
    margin-left: 18px;
}

.task-row {
    height: 34px;
    flex: none;
    margin: 0 5px;
    border-radius: 6px;
    background-color: #262933;
    display: flex;
    align-items: center;
    padding: 0 13px 0 12px;
    color: #a5a9b5;
    font-size: 11.3px;
    position: relative;
    z-index: 1;
}

.task-name {
    margin-left: 6px;
}

.task-count {
    margin-left: auto;
    font-weight: 500;
    margin-right: 6px;
}

.messages {
    flex: 1;
    min-height: 0;
    overflow: hidden;
    padding: 0 8px 0 13px;
    font-size: 11.6px;
    letter-spacing: -.18px;
    color: #e6e8ec;
}

.messages ul,
.messages ol,
.messages p,
.messages h4 {
    margin: 0;
    padding: 0;
}

.clipped {
    list-style: none;
    margin-top: -14px !important;
    padding-left: 13px !important;
    line-height: 20px;
}

code {
    font-family: "Liberation Mono", "DejaVu Sans Mono", monospace;
    color: #c8642c;
    font-size: 10.5px;
    letter-spacing: 0;
    margin: 0 3px;
}

.msg-head {
    margin-top: 10px !important;
    line-height: 18px;
    font-size: 11.6px;
    font-weight: 700;
    display: flex;
    align-items: center;
    gap: 4px;
}

.msg-head.status {
    margin-top: 11px !important;
    gap: 3px;
}

.msg-head.flow {
    margin-top: 11px !important;
}

.emoji {
    width: 12px;
    height: 12px;
    flex: none;
}

.rocket {
    vertical-align: -2px;
}

.bullets {
    margin-top: 3px !important;
    padding-left: 13px !important;
    line-height: 21px;
    list-style: disc;
}

.bullets li::marker {
    color: #e6e8ec;
}

.tick {
    width: 12px;
    height: 12px;
    margin: 0 6px 0 2px;
    vertical-align: -2px;
}

.msg-line {
    line-height: 18px;
}

.steps {
    margin-top: 12px !important;
    list-style: none;
    line-height: 21px;
}

.steps b,
.msg-head {
    color: #eceef2;
}

.msg-para {
    margin-top: 11px !important;
    line-height: 18px;
}

.checkpoint {
    width: 354px;
    height: 93px;
    margin: 12px 0 0 -5px;
    border-radius: 8px;
    background-color: #23262f;
    padding: 7px 7px 0;
}

.cp-head {
    display: flex;
    align-items: center;
    gap: 5px;
    padding-left: 1px;
    color: #9ca0ad;
    font-size: 10px;
    letter-spacing: -.1px;
    line-height: 14px;
}

.green {
    color: #46b060;
}

.messages .cp-text {
    width: 300px;
    margin-top: 3px;
    line-height: 18px;
}

.cp-actions {
    display: flex;
    gap: 6px;
    margin-top: 4px;
}

.cp-btn {
    height: 22px;
    display: flex;
    align-items: center;
    gap: 5px;
    padding: 0 6px;
    border-radius: 4px;
    background-color: #2a2d38;
    color: #b4b8c4;
    font-size: 10px;
    letter-spacing: -.1px;
}

.work-row {
    width: 354px;
    height: 27px;
    margin: 11px 0 0 -5px;
    border-radius: 8px;
    background-color: #23262f;
    display: flex;
    align-items: center;
    gap: 6px;
    padding: 0 9px 0 8px;
    color: #a5a9b5;
    font-size: 10px;
    letter-spacing: -.1px;
}

.work-caret {
    margin-left: auto;
}

.composer {
    height: 59px;
    flex: none;
    margin: 0 5px;
    border: 1px solid #353945;
    border-radius: 6px;
    background-color: #1f222c;
    padding: 3px 9px 0 5px;
}

.placeholder {
    padding-left: 4px;
    color: #8a8e9a;
    font-size: 11.5px;
    line-height: 16px;
}

.composer-bar {
    margin-top: 14px;
    display: flex;
    align-items: center;
    gap: 11px;
}

.build {
    width: 60px;
    height: 21px;
    border-radius: 4px;
    background-color: #23262f;
    display: flex;
    align-items: center;
    gap: 4px;
    padding-left: 3px;
    font-size: 11px;
    font-weight: 500;
}

.flip {
    transform: rotate(180deg);
    margin-left: 3px;
    color: #9ca0ad;
}

.composer-tune {
    margin-left: auto;
}

/* preview pane */
.pane {
    flex: 1;
    min-width: 0;
    display: flex;
    flex-direction: column;
    padding: 0 4px 6px 0;
}

.pane-tabs {
    height: 33px;
    flex: none;
    display: flex;
    align-items: center;
}

.pane-tab {
    width: 128px;
    height: 22px;
    display: flex;
    align-items: center;
    gap: 5px;
    padding: 0 8px 0 4px;
    border-radius: 4px;
    color: #a5a9b5;
    font-size: 11px;
}

.pane-tab.on {
    background-color: #252832;
    color: #e6e8ec;
}

.pane-tab + .pane-tab {
    margin-left: 5px;
}

.pane-x {
    margin-left: auto;
    color: #6f7380;
}

.pane-plus {
    margin-left: 6px;
}

.pane-tools {
    margin-left: auto;
    display: flex;
    align-items: center;
    gap: 11px;
    color: #d5d8df;
    padding-right: 4px;
}

.publish {
    width: 60px;
    height: 22px;
    margin: 0 -4px 0 -1px;
    border-radius: 3px;
    background-color: #0053a6;
    display: flex;
    align-items: center;
    justify-content: center;
    gap: 3px;
    font-size: 10.5px;
    color: #e6f0fb;
}

.frame {
    flex: 1;
    min-height: 0;
    display: flex;
    flex-direction: column;
    border: 1px solid #343846;
    border-radius: 6px;
    overflow: hidden;
}

.url-row {
    height: 28px;
    flex: none;
    display: flex;
    align-items: center;
    gap: 10px;
    padding: 0 8px 0 5px;
    background-color: #1a1d29;
    color: #cfd2d9;
}

.url-box {
    flex: 1;
    height: 19px;
    margin: 0 2px;
    border-radius: 3px;
    background-color: #252832;
    display: flex;
    align-items: center;
    padding-left: 4px;
    gap: 1px;
    font-size: 9.5px;
    color: #9a9fae;
}

.url-box b {
    font-weight: 400;
    color: #f2f3f5;
}

.devtools {
    display: flex;
    position: relative;
}

.red-badge {
    position: absolute;
    left: 3px;
    top: -7px;
    width: 11px;
    height: 11px;
    border-radius: 50%;
    background-color: #f44848;
    color: #fff;
    font-size: 8px;
    line-height: 11px;
    text-align: center;
}

.viewport {
    flex: 1;
    min-height: 0;
    display: flex;
    background-color: #1e1f1c;
}

.page {
    flex: 1;
    min-width: 0;
    font-family: "Lato", "Noto Sans", sans-serif;
}

.scrollbar {
    width: 15px;
    flex: none;
    display: flex;
    flex-direction: column;
    align-items: center;
    padding: 5px 0 4px;
    background-color: #1e1f1c;
}

.arrow-up {
    border: 5px solid transparent;
    border-top: 0;
    border-bottom: 6px solid #a3a3a3;
}

.arrow-down {
    margin-top: auto;
    border: 5px solid transparent;
    border-bottom: 0;
    border-top: 6px solid #a3a3a3;
}

.thumb {
    width: 10px;
    height: 615px;
    margin-top: 8px;
    border-radius: 5px;
    background-color: #a3a3a3;
}

.app-head {
    height: 51px;
    display: flex;
    align-items: center;
    border-bottom: 1px solid #3a3b36;
}

.brand-mark {
    width: 26px;
    height: 30px;
    margin-bottom: 4px;
}

.brand {
    margin-left: 4px;
    width: 90px;
    font-size: 15.5px;
    font-weight: 700;
    color: #f0f1ec;
    white-space: nowrap;
    letter-spacing: -.2px;
}

.app-nav {
    height: 37px;
    margin-left: 341px;
    width: 271px;
    display: flex;
    align-items: center;
    justify-content: space-between;
    padding: 0 16px;
    border: 1px solid #45473f;
    border-radius: 7px;
    background-color: #262822;
    color: #b5b8a8;
    font-size: 11.5px;
    letter-spacing: -.2px;
}

.head-right {
    margin-left: 349px;
    display: flex;
    align-items: center;
    gap: 25px;
    color: #e4e5e0;
    font-size: 11.5px;
    font-weight: 700;
    letter-spacing: -.2px;
}

.moon {
    margin-right: 4px;
}

.who {
    display: flex;
    align-items: center;
    gap: 6px;
}

.sub-head {
    height: 65px;
    display: flex;
    align-items: center;
    border-bottom: 1px solid #3a3b36;
    padding: 0 163px 0 173px;
    color: #eeefe9;
}

.back {
    width: 118px;
    display: flex;
    align-items: center;
    gap: 14px;
    font-size: 11.5px;
    letter-spacing: -.35px;
    white-space: nowrap;
}

.vline {
    width: 1px;
    height: 19px;
    margin: 0 13px 0 0;
    background-color: #3a3b36;
}

.sub-title {
    margin-right: auto;
}

.sub-title h1 {
    margin: 0;
    font-size: 15px;
    line-height: 18px;
    font-weight: 700;
    color: #f0f1ec;
}

.sub-title p {
    margin: 0;
    font-size: 11px;
    line-height: 17px;
    color: #8a8f78;
}

.btn {
    height: 32px;
    display: flex;
    align-items: center;
    gap: 12px;
    border-radius: 4px;
    font-size: 11.5px;
    letter-spacing: -.2px;
}

.btn.outline {
    width: 107px;
    padding-left: 14px;
    border: 1px solid #45473f;
}

.btn.primary {
    width: 100px;
    margin-left: 6px;
    padding-left: 14px;
    background-color: #7fa84a;
    color: #f4f8ec;
}

.content {
    padding: 0 163px;
}

.prompt-tab {
    height: 33px;
    border-radius: 0 0 4px 4px;
    background-color: #32372c;
    color: #9a9e8e;
    font-size: 11px;
    display: flex;
    align-items: center;
    justify-content: center;
    gap: 6px;
}

.preview-tab {
    width: 115px;
    height: 22px;
    margin: -3px auto 0;
    padding-top: 2px;
    border-radius: 4px 4px 0 0;
    background-color: #1e1f1c;
    color: #e4e5e0;
    font-size: 11px;
    display: flex;
    align-items: center;
    justify-content: center;
    gap: 8px;
}

.cards {
    display: flex;
}

.card {
    width: 591px;
    height: 407px;
    flex: none;
    border: 1px solid #3f4138;
    border-radius: 7px;
    background-color: #282a24;
    padding: 18px 19px 0;
}

.card + .gap-col + .card {
    width: 592px;
}

.gap-col {
    width: 20px;
    flex: none;
    overflow: hidden;
    padding-top: 9px;
    color: #8a8f78;
    font-size: 11px;
}

.card h2 {
    margin: 0;
    display: flex;
    align-items: center;
    gap: 6px;
    font-size: 18px;
    line-height: 24px;
    font-weight: 700;
    color: #f0f1ec;
    letter-spacing: -.25px;
}

.card-sub {
    margin: 2px 0 0;
    font-size: 11px;
    line-height: 16px;
    color: #8a8f78;
}

.phone {
    width: 526px;
    height: 281px;
    margin: 32px 0 0 13px;
    border-radius: 5px;
    background-color: #fff;
    padding: 12px 13px 0;
    text-align: center;
}

.phone-logo {
    width: 38px;
    height: 39px;
    margin: 0 auto;
    border-radius: 6px;
    background-color: #7fa84a;
}

.phone-title {
    margin-top: 15px;
    font-size: 13.5px;
    line-height: 18px;
    font-weight: 700;
    color: #e8ebe8;
}

.phone-desc {
    margin-top: 15px;
    font-size: 11px;
    line-height: 16px;
    color: #a0a39a;
}

.ph-btn {
    height: 26px;
    margin-top: 6px;
    border-radius: 3px;
    background-color: #32372c;
}

.green-bar {
    height: 32px;
    margin-top: 13px;
    border-radius: 6px;
    background-color: #7fa84a;
}

.chips {
    margin: 17px 0 0;
    display: flex;
    flex-direction: column;
    align-items: flex-start;
    gap: 6.4px;
}

.chip {
    height: 18px;
    display: flex;
    align-items: center;
    padding: 0 7px 0 12px;
    border: 1px solid #3f4138;
    border-radius: 9px;
    font-size: 10px;
    font-weight: 700;
    letter-spacing: -.2px;
    color: #eef0ee;
}

.chip.root {
    padding: 0 8px;
}

.chip i {
    width: 2px;
    height: 12px;
    background-color: #c9a227;
    flex: none;
}

.chip i.tiny {
    height: 6px;
    width: 2px;
    align-self: flex-start;
    margin-top: 2px;
}

.chip i.blue {
    background-color: #7fb0d0;
}

.chip b {
    margin-left: 17px;
}

.chip.nested i.tiny {
    margin-left: 7px;
    width: 1px;
}

/* windows taskbar */
.taskbar {
    height: 40px;
    flex: none;
    display: flex;
    align-items: center;
    background: linear-gradient(90deg, #1f3a42 0%, #1c3440 35%, #1a2a42 100%);
    color: #fff;
    padding-left: 16px;
}

.tb-ic {
    width: 24px;
    height: 24px;
    flex: none;
}

.win {
    width: 16px;
    height: 16px;
}

.find {
    margin-left: 29px;
    width: 22px;
    height: 22px;
}

.tb-grip {
    width: 3px;
    height: 16px;
    margin: 0 17px 0 14px;
    border-left: 1px solid #5b6c72;
    border-right: 1px solid #5b6c72;
}

.app {
    width: 49.4px;
    height: 40px;
    display: flex;
    align-items: center;
    justify-content: center;
    position: relative;
}

.app.run::after {
    content: "";
    position: absolute;
    left: 4px;
    right: 4px;
    bottom: 0;
    height: 2px;
    background-color: #76b9ed;
}

.app.current {
    background-color: #4a6265;
}

.app.current::after {
    left: 0;
    right: 0;
}

.tray {
    margin-left: auto;
    display: flex;
    align-items: center;
    height: 40px;
    padding-right: 16px;
    font-size: 12px;
    font-family: "Roboto", "Noto Sans", sans-serif;
}

.tray-help {
    margin-right: 79px;
    display: flex;
}

.weather {
    width: 21px;
    height: 21px;
    position: relative;
    margin-right: 9px;
}

.sun {
    display: block;
    width: 21px;
    height: 21px;
    border-radius: 50%;
    background: linear-gradient(200deg, #ffc400, #f58a00);
}

.sun-badge {
    position: absolute;
    right: -2px;
    top: -3px;
    width: 12px;
    height: 12px;
    border-radius: 50%;
    background-color: #c7281f;
    font-size: 8px;
    font-weight: 700;
    line-height: 12px;
    text-align: center;
}

.temp {
    width: 30px;
    font-size: 14px;
}

.sky {
    width: 42px;
    margin: 0 26px 0 10px;
    font-size: 12.5px;
}

.tray-up {
    margin-right: 12px;
}

.tray-wifi {
    margin-left: 1px;
}

.tray-batt {
    width: 16px;
    height: 10px;
    margin: 0 10px 0 8px;
}

.lang {
    font-size: 12.5px;
    width: 26px;
}

.clock {
    width: 60px;
    margin-left: 8px;
    display: flex;
    flex-direction: column;
    align-items: center;
    font-size: 12px;
    line-height: 19px;
}

.notif {
    width: 22px;
    height: 22px;
    margin-left: 20px;
    position: relative;
}

.notif-ic {
    width: 16px;
    height: 14px;
    display: block;
}

.notif-count {
    position: absolute;
    left: 7px;
    top: 5px;
    width: 16px;
    height: 16px;
    border-radius: 50%;
    background-color: #444;
    border: 1px solid #777;
    font-size: 10px;
    font-weight: 700;
    line-height: 14px;
    text-align: center;
}
```
